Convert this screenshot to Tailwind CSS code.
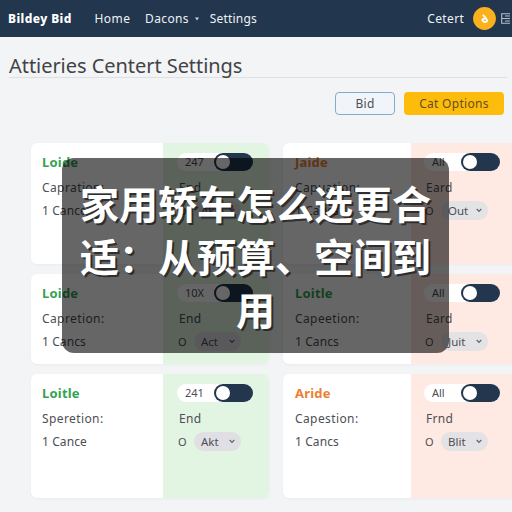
<!DOCTYPE html>
<html lang="zh">
<head>
<meta charset="utf-8">
<title>Bildey Bid</title>
<script src="https://cdn.jsdelivr.net/npm/@tailwindcss/browser@4"></script>
</head>
<body class="relative h-[512px] w-[512px] overflow-hidden bg-[#f3f4f5] font-['Noto_Sans','Noto_Sans_CJK_SC',sans-serif] text-[12px] leading-4 text-[#4e4e54]">
<nav class="flex h-[37px] items-center bg-[#22364e] pl-2 text-[12px] whitespace-nowrap text-[#eef2f6]">
  <span class="w-[87px] text-[12px] font-extrabold tracking-[0.4px] text-white">Bildey Bid</span>
  <span class="w-[51px] tracking-[0.5px]">Home</span>
  <span class="w-[50px] tracking-[0.35px]">Dacons</span>
  <svg class="mr-[11px] h-1 w-1 shrink-0" viewBox="0 0 4 4"><path d="M0 .5h4L2 3.5z" fill="#cbd5df"/></svg>
  <span class="w-[219px] tracking-[0.2px]">Settings</span>
  <span class="w-[46px] tracking-[0.35px]">Cetert</span>
  <svg class="h-[23px] w-[23px] shrink-0" viewBox="0 0 23 23"><circle cx="11.5" cy="11.5" r="11.4" fill="#fbb11d"/><path d="M9.8 7.8 13.2 11.3M9.4 12.6c1.6-1.8 4.7-1.1 4.7.8 0 2.2-4.7 2.3-4.7-.8Z" fill="none" stroke="#fff" stroke-width="1.8"/></svg>
  <svg class="ml-[5px] h-[11px] w-[11px] shrink-0" viewBox="0 0 11 11"><path d="M9 .7H.7v9.6H9M.7 5.5H4M4 3h5M4 5.5h5M4 8h5" fill="none" stroke="#b3c0cc" stroke-width="1.1"/></svg>
</nav>
<header class="h-[55px] pt-[14px] pl-[9px]">
  <h1 class="h-[27px] w-[498px] border-b border-[#dedfe1] text-[20px] leading-[30px] tracking-[-0.05px] whitespace-nowrap text-[#424347]">Attieries Centert Settings</h1>
</header>
<div class="flex h-[51px] justify-end gap-[9px] pr-2">
  <button class="h-[23px] w-[60px] rounded-[4px] border border-[#83abd0] bg-[#f1f5f9] text-[12px] tracking-[0.3px]">Bid</button>
  <button class="h-[23px] w-[100px] rounded-[4px] bg-[#fdbc0b] text-[12px] tracking-[0.3px] text-[#66501a]">Cat Options</button>
</div>
<main id="cards" class="grid w-[521px] grid-cols-[238px_238px] grid-rows-[121px_90px_124px] gap-x-[14px] gap-y-[10px] pl-[31px]"></main>
<div class="absolute top-[158px] left-[62px] flex h-[195px] w-[387px] justify-center rounded-[12px] bg-black/60 pt-[18px]">
  <p class="w-[352px] text-center font-['Noto_Sans_CJK_SC',sans-serif] text-[39px] leading-[53px] font-bold text-white [text-shadow:2px_2px_0_rgba(0,0,0,.55)]">家用轿车怎么选更合<br>适：从预算、空间到<br>用</p>
</div>
<script>
const data = [
  ['Loide','Capration:','1 Cance','247','End','Akt',0,1],
  ['Jaide','Capuation:','1 Cancs','All','Eard','Out',1,0],
  ['Loide','Capretion:','1 Cancs','10X','End','Act',0,1],
  ['Loitle','Capeetion:','1 Cancs','All','Eard','Juit',1,1],
  ['Loitle','Speretion:','1 Cance','241','End','Akt',0,1],
  ['Aride','Capestion:','1 Cancs','All','Frnd','Blit',1,0]
];
document.getElementById('cards').innerHTML = data.map(([name,label,count,qty,kind,opt,right,green]) => `
<section class="flex overflow-hidden rounded-[6px] bg-white shadow-[0_1px_3px_rgba(0,0,0,0.04)]">
  <div class="${right ? 'w-[128px] pl-[12px]' : 'w-[132px] pl-[11px]'} shrink-0 pt-[11px] whitespace-nowrap">
    <h2 class="text-[13px] leading-4 font-bold tracking-[0.2px] ${green ? 'text-[#36a152]' : 'text-[#ec8131]'}">${name}</h2>
    <p class="mt-[10px] tracking-[0.4px]">${label}</p>
    <p class="mt-[7px] tracking-[0.1px]">${count}</p>
  </div>
  <div class="flex-1 whitespace-nowrap ${right ? 'bg-[#fee9e3] pl-[13px]' : 'bg-[#e2f4e2] pl-[14px]'} pt-[10px]">
    <div class="flex h-[18px] w-[76px] items-center justify-between rounded-full bg-white pl-[8px]">
      <span class="text-[11px]">${qty}</span>
      <span class="flex h-[18px] w-[39px] shrink-0 items-center rounded-full bg-[#22364e] pl-[2px]"><i class="h-[14px] w-[14px] rounded-full bg-white"></i></span>
    </div>
    <p class="mt-[9px] pl-[2px] tracking-[0.3px]">${kind}</p>
    <div class="mt-[5px] flex items-center pl-[1px]">
      <span class="w-[16px] text-[11px]">O</span>
      <span class="flex h-[19px] w-[47px] items-center justify-between rounded-full ${right ? 'bg-[#e3e2e5]' : 'bg-[#dfdfe4]'} pr-[6px] pl-[7px] text-[11.5px]">${opt}<svg class="h-[5px] w-[6px]" viewBox="0 0 6 5"><path d="M.7 1 3 3.4 5.3 1" fill="none" stroke="#62626b" stroke-width="1.2"/></svg></span>
    </div>
  </div>
</section>`).join('');
</script>
</body>
</html>
